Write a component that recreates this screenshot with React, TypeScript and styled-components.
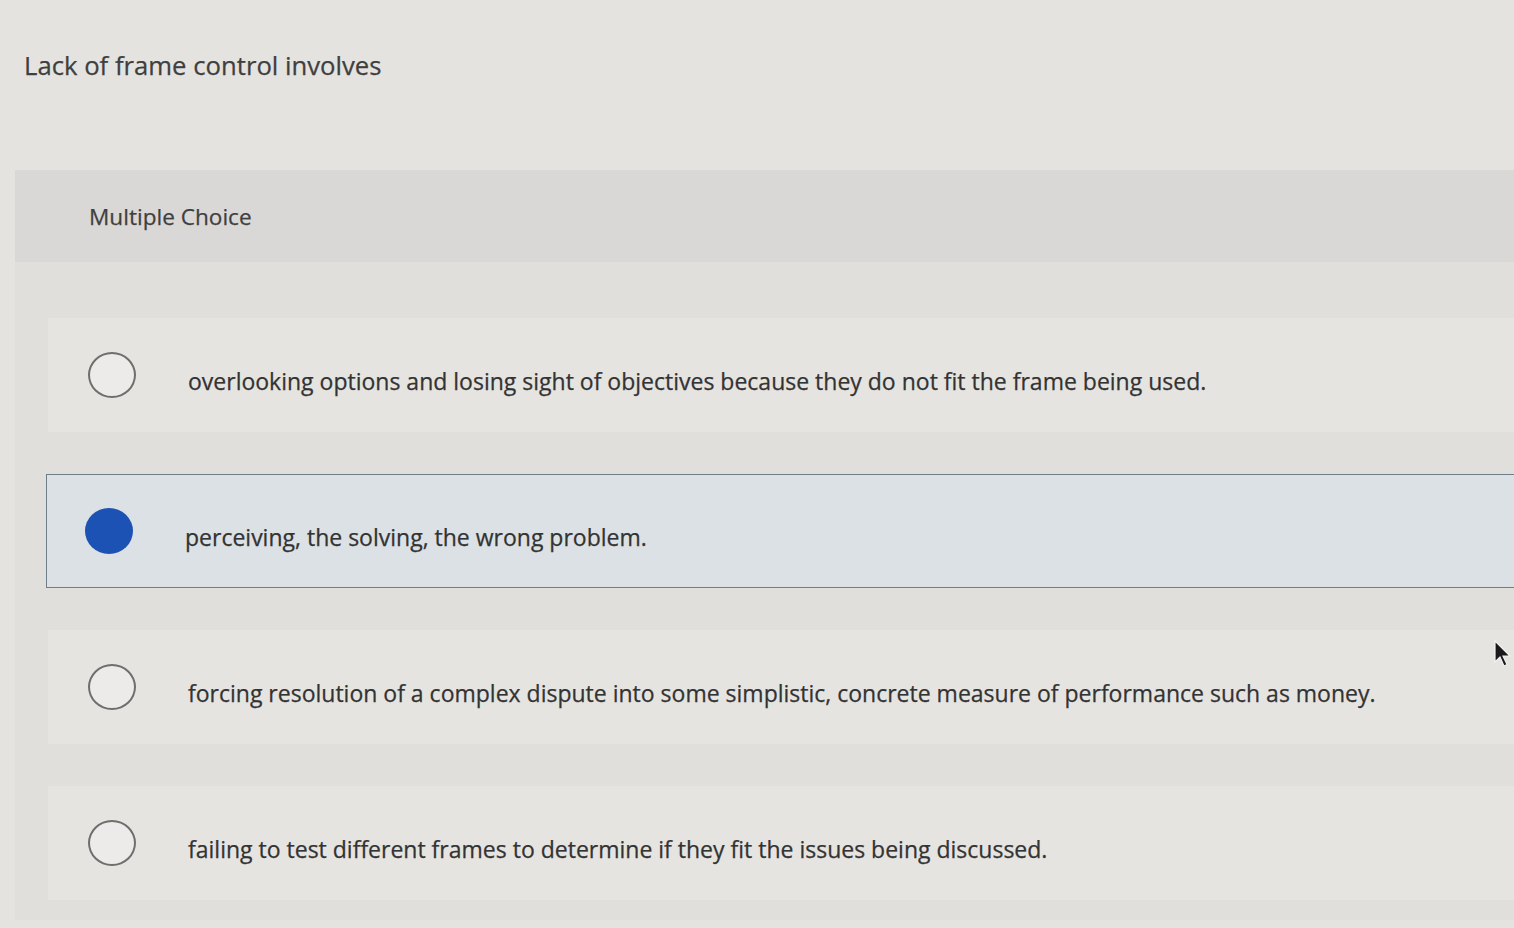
import React from "react";
import styled, { createGlobalStyle } from "styled-components";

const Global = createGlobalStyle`
  html, body { margin: 0; padding: 0; }
  body {
    background: #e5e3e0;
    font-family: "Open Sans", "Liberation Sans", sans-serif;
    color: #3b3b3b;
    overflow: hidden;
  }
`;

const Page = styled.div`
  position: relative;
  width: 1514px;
  height: 928px;
  padding-top: 48px;
  box-sizing: border-box;
`;

const Question = styled.div`
  margin-left: 24px;
  font-size: 25.7px;
  line-height: 36px;
  color: #3f3f3f;
  -webkit-text-stroke: 0.25px #3f3f3f;
`;

const Panel = styled.div`
  margin-top: 86px;
  margin-left: 15px;
  background: #e1dfdc;
  padding-bottom: 20px;
`;

const PanelHeader = styled.div`
  height: 92px;
  display: flex;
  align-items: center;
  padding-left: 74px;
  background: #dad8d6;
  font-size: 22.6px;
  color: #3f3f3f;
  -webkit-text-stroke: 0.25px #3f3f3f;
`;

const Options = styled.div`
  display: flex;
  flex-direction: column;
  gap: 42px;
  padding-top: 56px;
  padding-left: 33px;
`;

const Row = styled.div<{ $selected?: boolean }>`
  height: 114px;
  box-sizing: border-box;
  display: flex;
  align-items: center;
  padding-left: ${(p) => (p.$selected ? "38px" : "40px")};
  gap: 52px;
  background: ${(p) => (p.$selected ? "#dbe1e4" : "#e6e4e1")};
  border: ${(p) => (p.$selected ? "1.5px solid #6f7d89" : "none")};
  border-right: none;
  margin-left: ${(p) => (p.$selected ? "-2px" : "0")};
`;

const Radio = styled.div<{ $checked?: boolean }>`
  flex: none;
  width: 48px;
  height: 46px;
  border-radius: 50%;
  box-sizing: border-box;
  border: ${(p) => (p.$checked ? "none" : "2px solid #6e6e6e")};
  background: ${(p) => (p.$checked ? "#1b52b3" : "#ecebea")};
`;

const Label = styled.div`
  font-size: 23px;
  color: #333;
  -webkit-text-stroke: 0.25px #333;
  white-space: nowrap;
  padding-top: 12px;
`;

const Cursor = styled.svg`
  position: absolute;
  left: 1494px;
  top: 640px;
`;

const options = [
  "overlooking options and losing sight of objectives because they do not fit the frame being used.",
  "perceiving, the solving, the wrong problem.",
  "forcing resolution of a complex dispute into some simplistic, concrete measure of performance such as money.",
  "failing to test different frames to determine if they fit the issues being discussed.",
];

export default function App() {
  return (
    <>
      <Global />
      <Page>
        <Question>Lack of frame control involves</Question>
        <Panel>
          <PanelHeader>Multiple Choice</PanelHeader>
          <Options>
            {options.map((t, i) => (
              <Row key={i} $selected={i === 1}>
                <Radio $checked={i === 1} />
                <Label>{t}</Label>
              </Row>
            ))}
          </Options>
        </Panel>
        <Cursor width="18" height="28" viewBox="0 0 18 28">
          <path d="M1 1 L1 22 L6 17 L10 26 L13 24.5 L9 16 L16 16 Z" fill="#1a1a1a" stroke="#f2f2f2" strokeWidth="1.2" />
        </Cursor>
      </Page>
    </>
  );
}
